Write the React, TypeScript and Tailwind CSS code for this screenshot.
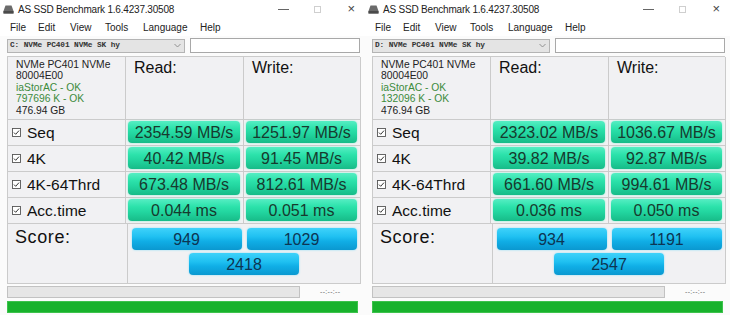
import React from "react";

type Data = {
  drive: string;
  model: string;
  fw: string;
  driver: string;
  size1: string;
  cap: string;
  rows: [string, string, string][];
  scores: [string, string, string];
};

const left: Data = {
  drive: "C: NVMe PC401 NVMe SK hy",
  model: "NVMe PC401 NVMe",
  fw: "80004E00",
  driver: "iaStorAC - OK",
  size1: "797696 K - OK",
  cap: "476.94 GB",
  rows: [
    ["Seq", "2354.59 MB/s", "1251.97 MB/s"],
    ["4K", "40.42 MB/s", "91.45 MB/s"],
    ["4K-64Thrd", "673.48 MB/s", "812.61 MB/s"],
    ["Acc.time", "0.044 ms", "0.051 ms"],
  ],
  scores: ["949", "1029", "2418"],
};

const right: Data = {
  drive: "D: NVMe PC401 NVMe SK hy",
  model: "NVMe PC401 NVMe",
  fw: "80004E00",
  driver: "iaStorAC - OK",
  size1: "132096 K - OK",
  cap: "476.94 GB",
  rows: [
    ["Seq", "2323.02 MB/s", "1036.67 MB/s"],
    ["4K", "39.82 MB/s", "92.87 MB/s"],
    ["4K-64Thrd", "661.60 MB/s", "994.61 MB/s"],
    ["Acc.time", "0.036 ms", "0.050 ms"],
  ],
  scores: ["934", "1191", "2547"],
};

function DriveIcon() {
  return (
    <svg width="11" height="9" viewBox="0 0 11 9">
      <path d="M2.5 0.5 H8.5 L10.5 6 V8.5 H0.5 V6 Z" fill="#6b6b6b" />
      <rect x="0.5" y="6" width="10" height="2.5" fill="#4a4a4a" />
    </svg>
  );
}

function Check() {
  return (
    <svg width="9" height="9" viewBox="0 0 9 9" className="shrink-0">
      <rect x="0.5" y="0.5" width="8" height="8" fill="#fff" stroke="#555" strokeWidth="0.9" />
      <path d="M2 4.6 L3.7 6.3 L7 2.6" fill="none" stroke="#333" strokeWidth="1" />
    </svg>
  );
}

function GreenBtn({ v }: { v: string }) {
  return (
    <div className="h-[22px] rounded-[4px] bg-[linear-gradient(#55eec3_0%,#2ce2ab_35%,#22d59f_60%,#17bb88_100%)] shadow-[0_0_2px_#7ff0cf] flex items-center justify-center text-[16px] leading-none text-[#173a2e] pt-[1px]">
      {v}
    </div>
  );
}

function BlueBtn({ v }: { v: string }) {
  return (
    <div className="h-[22px] w-[110px] rounded-[4px] bg-[linear-gradient(#3fd2fa_0%,#1fc0f1_40%,#10aee6_60%,#0a98d0_100%)] shadow-[0_0_2px_#7fdcf8] flex items-center justify-center text-[16px] leading-none text-[#0d3553] pt-[2px]">
      {v}
    </div>
  );
}

function Window({ d }: { d: Data }) {
  return (
    <div className="w-[365px] h-[315px] bg-[#fbfbfb] flex flex-col shrink-0">
      {/* title bar */}
      <div className="h-[18px] flex items-center pl-[3px] bg-white">
        <DriveIcon />
        <span className="ml-[4px] text-[10px] tracking-[-0.2px] text-[#222]">AS SSD Benchmark 1.6.4237.30508</span>
        <div className="ml-auto flex items-center">
          <div className="w-[11px] h-[1px] bg-[#666] mr-[25px]" />
          <div className="w-[7px] h-[7px] border border-[#cfcfcf] mr-[26px]" />
          <span className="text-[13px] leading-none text-[#444] mr-[10px] -mt-[1px]">×</span>
        </div>
      </div>
      {/* menu */}
      <div className="h-[18px] flex items-center pl-[10px] text-[10px] text-[#222] bg-white">
        <span className="w-[28px]">File</span>
        <span className="w-[32px]">Edit</span>
        <span className="w-[35px]">View</span>
        <span className="w-[38px]">Tools</span>
        <span className="w-[57px]">Language</span>
        <span>Help</span>
      </div>
      {/* combo row */}
      <div className="flex items-center mt-[2px] pl-[7px] pr-[5px] gap-[5px] h-[15px]">
        <div className="w-[178px] h-[14px] bg-[#e4e4e4] border border-[#b4b4b4] flex items-center pl-[2px] pr-[3px]">
          <span className="font-['Liberation_Mono',monospace] text-[7.8px] font-bold text-[#333] tracking-[-0.1px]">{d.drive}</span>
          <svg width="7" height="5" viewBox="0 0 7 5" className="ml-auto">
            <path d="M0.5 1 L3.5 4 L6.5 1" fill="none" stroke="#888" strokeWidth="0.9" />
          </svg>
        </div>
        <div className="flex-1 h-[15px] bg-white border border-[#a8a8a8]" />
      </div>
      {/* table */}
      <div className="mt-[3px] mx-[7px] w-[353px] border-t border-l border-[#cbcbcb]">
        <div className="grid grid-cols-[118px_118px_117px]">
          <div className="h-[63px] border-r border-b border-[#cbcbcb] bg-[#f1f1f3] pl-[8px] pt-[2px] text-[10.3px] leading-[11.4px]">
            <div className="text-[#222]">{d.model}</div>
            <div className="text-[#222]">{d.fw}</div>
            <div className="text-[#3c8b3c]">{d.driver}</div>
            <div className="text-[#3c8b3c]">{d.size1}</div>
            <div className="text-[#222]">{d.cap}</div>
          </div>
          <div className="h-[63px] border-r border-b border-[#cbcbcb] bg-[#f1f1f3] pl-[8px] pt-[3px] text-[16px] leading-none text-[#111]">Read:</div>
          <div className="h-[63px] border-r border-b border-[#cbcbcb] bg-[#f1f1f3] pl-[8px] pt-[3px] text-[16px] leading-none text-[#111]">Write:</div>
          {d.rows.map((r, i) => (
            <React.Fragment key={i}>
              <div className="h-[26px] border-r border-b border-[#cbcbcb] bg-[#f1f1f3] flex items-center pl-[4px] gap-[6px]">
                <Check />
                <span className="text-[15.5px] text-[#111] leading-none">{r[0]}</span>
              </div>
              <div className="h-[26px] border-r border-b border-[#cbcbcb] bg-[#f1f1f3] pl-[2px] pr-[3px] pt-[1px]">
                <GreenBtn v={r[1]} />
              </div>
              <div className="h-[26px] border-r border-b border-[#cbcbcb] bg-[#f1f1f3] pl-[2px] pr-[3px] pt-[1px]">
                <GreenBtn v={r[2]} />
              </div>
            </React.Fragment>
          ))}
        </div>
        <div className="grid grid-cols-[120px_233px] h-[60px]">
          <div className="border-r border-b border-[#cbcbcb] bg-[#f1f1f3] pl-[7px] pt-[4px] text-[18px] leading-none tracking-[0.6px] text-[#111]">Score:</div>
          <div className="border-r border-b border-[#cbcbcb] bg-[#f1f1f3] flex flex-col items-center pt-[4px] gap-[3px]">
            <div className="flex gap-[5px]">
              <BlueBtn v={d.scores[0]} />
              <BlueBtn v={d.scores[1]} />
            </div>
            <BlueBtn v={d.scores[2]} />
          </div>
        </div>
      </div>
      {/* progress */}
      <div className="mt-[2px] mx-[7px] flex items-center">
        <div className="w-[293px] h-[12px] bg-[#e6e6e6] border border-[#c2c2c2]" />
        <span className="ml-[20px] text-[7px] text-[#666] tracking-[0.3px]">--:--:--</span>
      </div>
      <div className="mt-[3px] mx-[7px] h-[12px] bg-[#18b22c] border border-[#3cc24c]" />
    </div>
  );
}

export default function App() {
  return (
    <div className="w-[730px] h-[315px] flex bg-white overflow-hidden font-['Liberation_Sans',Arial,sans-serif]">
      <Window d={left} />
      <Window d={right} />
    </div>
  );
}
